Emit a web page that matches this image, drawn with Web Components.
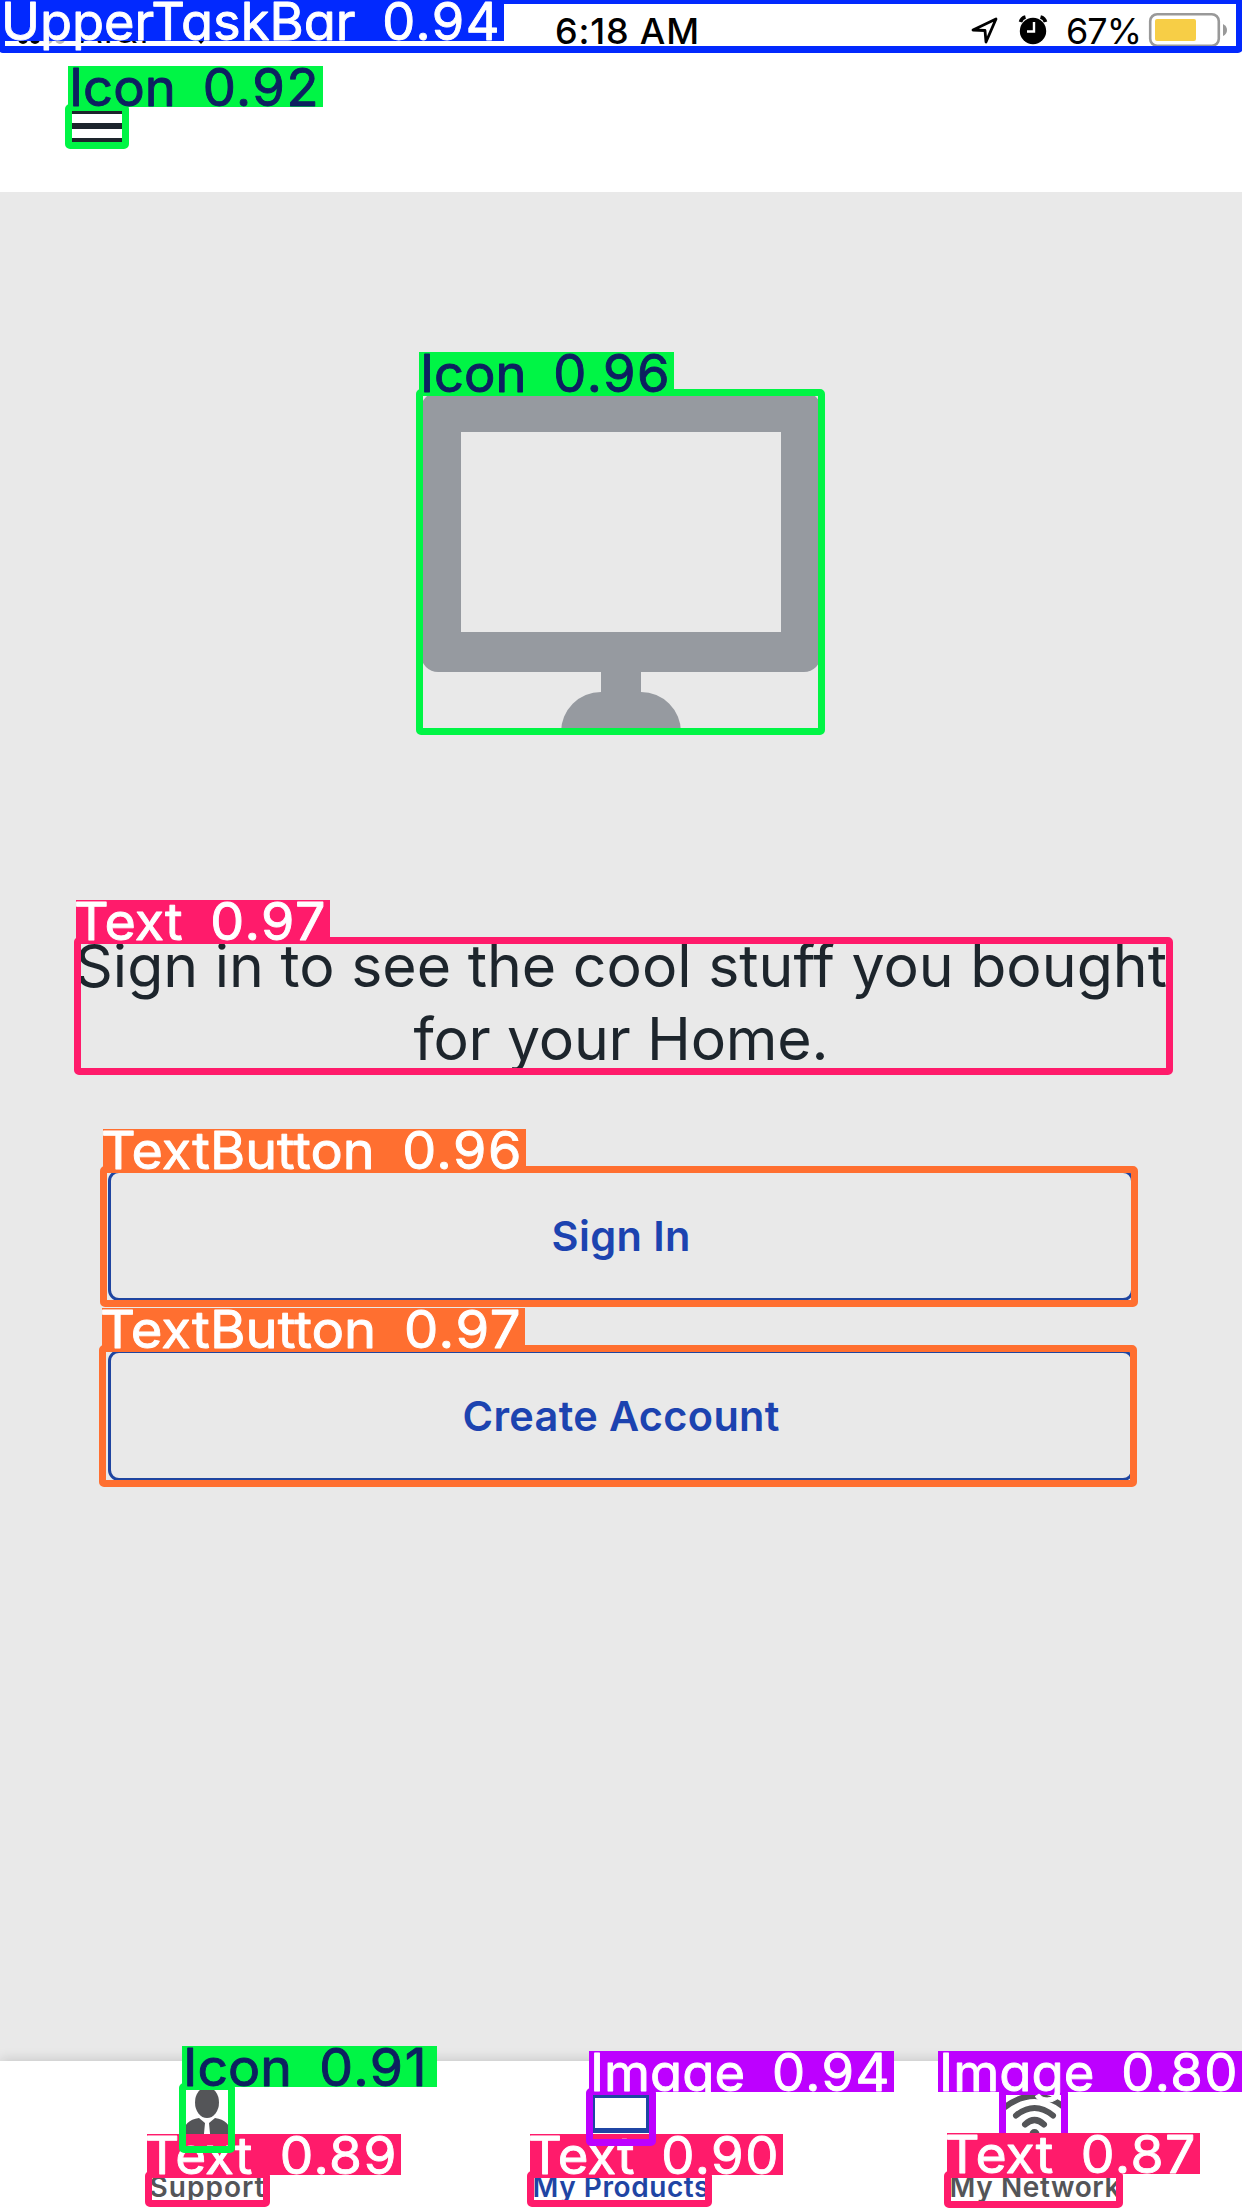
<!DOCTYPE html>
<html lang="en">
<head>
<meta charset="utf-8">
<title>My Products</title>
<style>
html,body{margin:0;padding:0}
body{width:1242px;height:2208px;overflow:hidden;font-family:Inter,"Liberation Sans",sans-serif}
</style>
</head>
<body>
<app-screen></app-screen>
<script>
const define=(name,html,setup)=>customElements.define(name,class extends HTMLElement{
  connectedCallback(){
    if(this.shadowRoot)return;
    const t=document.createElement('template');
    t.innerHTML=typeof html==='function'?html(this):html;
    this.attachShadow({mode:'open'}).appendChild(t.content.cloneNode(true));
    if(setup)setup(this);
  }
});

/* Single line of text whose tracking is spread to fill a given width */
define('fit-text',`<style>:host{display:block;white-space:nowrap}span{display:inline-block}</style><span><slot></slot></span>`,el=>{
  const s=el.shadowRoot.querySelector('span'),w=+el.getAttribute('w'),n=el.textContent.length;
  const d=(w-s.getBoundingClientRect().width)/(n-1);
  s.style.letterSpacing=d+'px';
  s.style.marginRight=-d+'px';
});

define('status-bar',`<style>
:host{display:grid;grid-template-columns:555px 1fr auto;height:60px;box-sizing:border-box;padding:9px 15px 0 0;color:#000;font-size:36px;line-height:44px}
.l{display:flex;align-items:flex-start;padding-left:17px;gap:6px}
.t{font-weight:500}
.r{display:flex;align-items:flex-start}
svg{display:block}
.l fit-text{font-size:34px}
</style>
<div class="l"><svg width="56" height="44"><g><circle cx="6" cy="30" r="5"/><circle cx="18" cy="30" r="5"/><circle cx="31" cy="30" r="5" fill="#bbb"/><circle cx="43" cy="30" r="5" fill="#bbb"/></g></svg><fit-text w="76">AT&amp;T</fit-text><svg width="60" height="44"><path d="M40 35 30 24q10-8 20 0z"/></svg></div>
<fit-text class="t" w="144">6:18 AM</fit-text>
<div class="r">
<svg width="96" height="44" viewBox="970 9 96 44"><path d="M973 30 996 19 986 42 985 30.500Z" fill="none" stroke="#000" stroke-width="2.800" stroke-linejoin="round"/>
<ellipse cx="1033" cy="31" rx="13.200" ry="13.200"/><path d="M1020.500 22q1-4 5-5M1045.500 22q-1-4-5-5" fill="none" stroke="#000" stroke-width="3.600"/><path d="M1034 22v9.500h-7" fill="none" stroke="#fff" stroke-width="2.400"/></svg>
<fit-text w="76">67%</fit-text>
<svg width="85" height="44" viewBox="1142 9 85 44"><rect x="1150.200" y="14.200" width="68.600" height="31.600" rx="7" fill="#fff" stroke="#999" stroke-width="2.600"/><rect x="1155" y="19" width="41" height="22" rx="2" fill="#f7ce46"/><path d="M1223 24q4 2 4 6t-4 6z" fill="#999"/></svg>
</div>`);

define('menu-button',`<style>:host{display:block;width:50px;height:32px}svg{display:block}</style>
<svg width="50" height="32" fill="#1d252c"><path d="M0 0h50v4H0zM0 13h50v6H0zM0 28h50v4H0z"/></svg>`);

define('top-bar',`<style>:host{display:block;height:192px;background:#fff}div{padding:50px 72px 0}</style>
<status-bar></status-bar><div><menu-button></menu-button></div>`);

define('tv-icon',`<style>:host{display:block;width:400px;height:340px}svg{display:block}</style>
<svg width="400" height="340"><path fill="#969aa0" fill-rule="evenodd" d="M17 0H383A17 17 0 0 1 400 17V263A17 17 0 0 1 383 280H220V300A40 40 0 0 1 260 340H140A40 40 0 0 1 180 300V280H17A17 17 0 0 1 0 263V17A17 17 0 0 1 17 0ZM40 40V240H360V40Z"/></svg>`);

define('outline-button',`<style>:host{display:flex;box-sizing:border-box;width:1026px;height:131px;border:3px solid #1f45a0;border-radius:11px;align-items:center;justify-content:center;color:#1c43b0;font-weight:600;font-size:41.500px;line-height:50px}</style><slot></slot>`);

define('main-panel',`<style>
:host{display:flex;flex-direction:column;align-items:center;height:1869px;box-sizing:border-box;padding-top:200px;background:#e9e9e9}
.copy{margin-top:197px;display:flex;flex-direction:column;align-items:center;font-size:59px;line-height:73px;color:#1d252c}
.b{display:flex;flex-direction:column;gap:49px;margin-top:95px}
</style>
<tv-icon></tv-icon>
<div class="copy"><fit-text w="1092">Sign in to see the cool stuff you bought</fit-text><fit-text w="415">for your Home.</fit-text></div>
<div class="b"><outline-button><fit-text w="139">Sign In</fit-text></outline-button><outline-button><fit-text w="317">Create Account</fit-text></outline-button></div>`);

define('tab-item',`<style>:host{display:flex;flex-direction:column;align-items:center;color:#545558;font-weight:600;font-size:28px;line-height:34px}:host([active]){color:#1f45a4}
::slotted(svg){display:block;margin-bottom:18px}</style><slot name="icon"></slot><slot></slot>`);

define('tab-bar',`<style>:host{display:grid;grid-template-columns:repeat(3,1fr);width:1242px;height:147px;background:#fff;box-sizing:border-box;padding-top:25px;box-shadow:0 -1px 12px rgba(0,0,0,.16);clip-path:inset(-14px 0 0 0)}</style>
<tab-item><svg slot="icon" width="60" height="66" viewBox="177 2086 60 66" fill="#545558"><ellipse cx="207" cy="2102.500" rx="12" ry="15.500"/><path d="M183 2144V2134Q184 2120 199 2118L205 2123 203 2144ZM231 2144V2134Q230 2120 215 2118L209 2123 211 2144Z"/></svg><fit-text w="115">Support</fit-text></tab-item>
<tab-item active><svg slot="icon" width="60" height="66" viewBox="591 2086 60 66"><path fill="#1f45a4" fill-rule="evenodd" d="M593 2094H649V2133H593ZM595 2098V2128H646V2098Z"/></svg><fit-text w="177">My Products</fit-text></tab-item>
<tab-item><svg slot="icon" width="72" height="66" viewBox="999 2086 72 66" fill="none" stroke="#545558" stroke-width="6" stroke-linecap="round"><path d="M1025 2124.500q9.500-9 19 0M1016 2115.500q18.500-15 37 0M1005 2107q29.500-22 59 0"/><circle cx="1034.500" cy="2134" r="2"/></svg><fit-text w="171">My Network</fit-text></tab-item>`);

/* Outlined region with a caption tab; box="x y w h" is the outer edge, tab="x y w" the caption */
define('region-mark',el=>{
  const [x,y,w,h]=el.getAttribute('box').split(' ').map(Number);
  const [tx,ty,tw]=el.getAttribute('tab').split(' ').map(Number);
  const c=el.getAttribute('color'),ink=el.getAttribute('ink')||'#fff';
  const [a,b]=[el.getAttribute('lead')||4,el.getAttribute('tail')||7];
  return `<style>:host{position:absolute;inset:0;pointer-events:none}svg{display:block}text{font-family:Inter,"Liberation Sans",sans-serif;font-size:52px;word-spacing:12px;font-feature-settings:"cv11","ss03";stroke-linejoin:round}.n{letter-spacing:1.500px}</style>
<svg width="1242" height="2208"><rect x="${x+3.5}" y="${y+3.5}" width="${w-7}" height="${h-7}" rx="1.500" fill="none" stroke="${c}" stroke-width="7"/><rect x="${tx}" y="${ty}" width="${tw}" height="41" fill="${c}"/><text x="${tx+ +a-3}" y="${ty+39.5}" textLength="${tw-a-b+7}" lengthAdjust="spacingAndGlyphs" fill="${ink}" stroke="${ink}" stroke-width=".9">${el.getAttribute('caption').replace(/[\d.]+$/,'<tspan class="n">$&</tspan>')}</text></svg>`;
});

define('app-screen',`<style>:host{display:flex;flex-direction:column;position:relative;width:1242px;height:2208px;overflow:hidden;background:#fff}</style>
<top-bar></top-bar><main-panel></main-panel><tab-bar></tab-bar>
<region-mark box="-2 -3 1245 56" tab="0 0 504" color="#0229fe" caption="UpperTaskBar 0.94"></region-mark>
<region-mark box="65 104 64 45" tab="68 66 255" color="#00f545" ink="#0d2060" caption="Icon 0.92"></region-mark>
<region-mark box="416 389 409 346" tab="419 352 255" color="#00f545" ink="#0d2060" caption="Icon 0.96"></region-mark>
<region-mark box="74 937 1099 138" tab="76 900 254" color="#ff1b6b" lead="1" caption="Text 0.97"></region-mark>
<region-mark box="100 1166 1038 141" tab="103 1129 423" color="#ff6f30" lead="1" caption="TextButton 0.96"></region-mark>
<region-mark box="99 1345 1038 142" tab="102 1308 423" color="#ff6f30" lead="1" caption="TextButton 0.97"></region-mark>
<region-mark box="145 2171 125 36" tab="147 2134 254" color="#ff1b6b" lead="1" caption="Text 0.89"></region-mark>
<region-mark box="527 2171 185 36" tab="530 2134 253" color="#ff1b6b" lead="1" caption="Text 0.90"></region-mark>
<region-mark box="179 2083 56 70" tab="182 2046 255" color="#00f545" ink="#0d2060" tail="13" caption="Icon 0.91"></region-mark>
<region-mark box="586 2088 70 58" tab="589 2051 305" color="#bd00ff" caption="Image 0.94"></region-mark>
<region-mark box="999 2088 69 58" tab="938 2051 304" color="#bd00ff" caption="Image 0.80"></region-mark>
<region-mark box="944 2171 179 37" tab="947 2133 253" color="#ff1b6b" lead="1" caption="Text 0.87"></region-mark>`);
</script>
</body>
</html>
